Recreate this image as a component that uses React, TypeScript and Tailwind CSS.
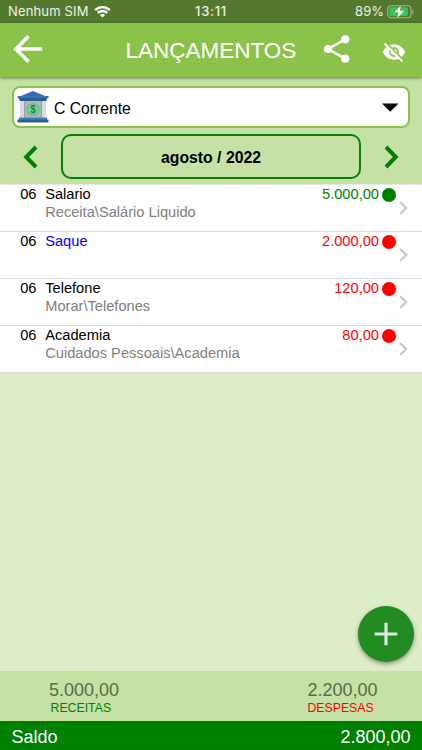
const SANS = "font-['Liberation_Sans',Arial,sans-serif]";

type Entry = {
  title: string;
  category: string;
  amount: string;
  titleColor: string;
  amountColor: string;
  dotColor: string;
};

const entries: Entry[] = [
  { title: "Salario", category: "Receita\\Salário Liquido", amount: "5.000,00", titleColor: "text-black", amountColor: "text-[#008000]", dotColor: "bg-[#008000]" },
  { title: "Saque", category: "", amount: "2.000,00", titleColor: "text-[#0000ff]", amountColor: "text-[#ff0000]", dotColor: "bg-[#ff0000]" },
  { title: "Telefone", category: "Morar\\Telefones", amount: "120,00", titleColor: "text-black", amountColor: "text-[#ff0000]", dotColor: "bg-[#ff0000]" },
  { title: "Academia", category: "Cuidados Pessoais\\Academia", amount: "80,00", titleColor: "text-black", amountColor: "text-[#ff0000]", dotColor: "bg-[#ff0000]" },
];

function StatusBar() {
  return (
    <div className="grid h-[23px] shrink-0 grid-cols-3 items-center bg-[#54782d] pr-[8px] pl-2 font-['Inter',sans-serif] text-[13px] text-white/90">
      <div className="flex items-center gap-[5px] whitespace-nowrap">
        <span className="tracking-[0.15px]">Nenhum SIM</span>
        <svg width="17" height="13" viewBox="0 0 18 13" fill="none" stroke="white" strokeWidth="2.5">
          <path d="M1.2 5.1a11 11 0 0 1 15.6 0" />
          <path d="M4.1 8a7 7 0 0 1 9.8 0" />
          <path d="M6.3 10.2a3.9 3.9 0 0 1 5.4 0L9 12.9Z" fill="white" stroke="none" />
        </svg>
      </div>
      <span className="text-center font-medium tracking-[0.7px]">13:11</span>
      <div className="flex items-center justify-end gap-[3px]">
        <span>89%</span>
        <svg width="27" height="14" viewBox="0 0 27 14">
          <rect x="0.7" y="0.7" width="23.3" height="12" rx="3.5" fill="none" stroke="#a5b792" strokeWidth="1.1" />
          <rect x="2.3" y="2.3" width="18.5" height="8.8" rx="1.8" fill="#33c75a" />
          <path d="M25.2 4.5v4.4a2.5 2.5 0 0 0 0-4.4Z" fill="#a5b792" />
          <path d="M14.2.2 6.8 7.4h4.4L9.8 13.4l8-7.6h-4.6Z" fill="white" stroke="#54782d" strokeWidth=".4" />
        </svg>
      </div>
    </div>
  );
}

function Header() {
  return (
    <header className="z-10 flex h-[54px] shrink-0 items-center bg-[#8bc34a] pl-[13px] text-white shadow-[0_1px_3px_rgba(0,0,0,0.5)]">
      <svg className="-mt-[2px]" width="30" height="30" viewBox="0 0 30 30" fill="none" stroke="white" strokeWidth="3.5">
        <path d="M29 15H3M15.5 2.3 3 15 15.5 27.7" />
      </svg>
      <h1 className="ml-[82.5px] w-[172.5px] pt-[2px] text-[22.5px] leading-none whitespace-nowrap">LANÇAMENTOS</h1>
      <svg className="-mt-[2px] ml-[25px]" width="28" height="30" viewBox="0 0 28 30" fill="white">
        <path d="M22 5.3 5 15l17 9.7" fill="none" stroke="white" strokeWidth="2.5" />
        <circle cx="22.3" cy="5.3" r="4.1" />
        <circle cx="5" cy="15" r="4.1" />
        <circle cx="22.3" cy="24.7" r="4.1" />
      </svg>
      <svg className="mt-[3px] ml-[31px]" width="24" height="24" viewBox="0 0 24 24" fill="white" stroke="white" strokeWidth=".3">
        <path d="M12 7c2.76 0 5 2.24 5 5 0 .65-.13 1.26-.36 1.83l2.92 2.92c1.51-1.26 2.7-2.89 3.43-4.75-1.73-4.39-6-7.5-11-7.5-1.4 0-2.74.25-3.98.7l2.16 2.16C10.74 7.13 11.35 7 12 7zM2 4.27l2.28 2.28.46.46A11.8 11.8 0 0 0 1 12c1.73 4.39 6 7.5 11 7.5 1.55 0 3.03-.3 4.38-.84l.42.42L19.73 22 21 20.73 3.27 3 2 4.27zM7.53 9.8l1.55 1.55c-.05.21-.08.43-.08.65 0 1.66 1.34 3 3 3 .22 0 .44-.03.65-.08l1.55 1.55c-.67.33-1.41.53-2.2.53-2.76 0-5-2.24-5-5 0-.79.2-1.53.53-2.2zm4.31-.78 3.15 3.15.02-.16c0-1.66-1.34-3-3-3l-.17.01z" />
      </svg>
    </header>
  );
}

function BankIcon() {
  return (
    <svg width="32" height="32" viewBox="0 0 32 32">
      <path d="M3 9h26v19H3Z" fill="#b4b6b9" />
      <path d="M3 10h4v17H3ZM25 10h4v17h-4Z" fill="#d8dadd" />
      <path d="M7 10h1.2v17H7ZM23.8 10H25v17h-1.2Z" fill="#9ba1a8" />
      <circle cx="16" cy="18.5" r="6.6" fill="#68bd8d" />
      <circle cx="16" cy="18.5" r="5" fill="#6fdc98" />
      <text x="16" y="22" textAnchor="middle" className="fill-[#17804a] text-[10px] font-bold">$</text>
      <path d="M16 0 30.5 6H1.5Z" fill="#356ba8" />
      <path d="M0.5 5.5h31L29 10H3Z" fill="#2d5c94" />
      <path d="M.5 5h31v1.8H.5Z" fill="#3c76b3" />
      <path d="M2 26.5h28V29H2Z" fill="#4380bd" />
      <path d="M.5 28.5h31v3H.5Z" fill="#2d5c94" />
    </svg>
  );
}

function Filters() {
  return (
    <section className="flex h-[107px] shrink-0 flex-col bg-[#c5e1a5] px-3 pt-[9px]">
      <div className="flex h-[42px] shrink-0 items-center rounded-[8px] border-2 border-[#8bc34a] bg-white pr-[9px] pl-[3px]">
        <BankIcon />
        <span className="ml-[5px] flex-1 pt-[3px] text-[15.7px] text-black">C Corrente</span>
        <svg width="17" height="9" viewBox="0 0 17 9"><path d="M0 .5h16.5L8.2 8.8Z" fill="black" /></svg>
      </div>
      <div className="mt-[6px] flex h-[45px] shrink-0 items-center">
        <svg className="ml-[11px]" width="15" height="24" viewBox="0 0 15 24" fill="none" stroke="#008000" strokeWidth="4">
          <path d="M13 2 3.2 12 13 22" />
        </svg>
        <div className="ml-[23px] flex h-[45px] w-[300px] items-center justify-center rounded-[10px] border-2 border-[#087f08] pt-[2px] text-[15.8px] font-bold text-black">
          agosto / 2022
        </div>
        <svg className="ml-[23px]" width="15" height="24" viewBox="0 0 15 24" fill="none" stroke="#008000" strokeWidth="4">
          <path d="M2 2l9.8 10L2 22" />
        </svg>
      </div>
    </section>
  );
}

function EntryRow({ entry }: { entry: Entry }) {
  return (
    <li className="flex h-[47px] border-b border-[#dcdcdc] bg-white pl-[20.2px] text-[14.65px] leading-[18px]">
      <span className="w-[25px] text-black">06</span>
      <div className="flex-1">
        <div className={entry.titleColor}>{entry.title}</div>
        <div className="text-[#808080]">{entry.category}</div>
      </div>
      <span className={entry.amountColor}>{entry.amount}</span>
      <div className="flex w-[43px] pl-[3px]">
        <span className={`mt-[3px] size-[14px] shrink-0 rounded-full ${entry.dotColor}`} />
        <svg className="mt-[15px] ml-[3px] shrink-0" width="9" height="16" viewBox="0 0 9 16" fill="none" stroke="#c7c7cc" strokeWidth="2.2">
          <path d="M1 2 7.2 8 1 14" />
        </svg>
      </div>
    </li>
  );
}

function Summary() {
  return (
    <footer className="shrink-0">
      <div className="flex h-[50px] justify-between bg-[#c5e1a5] pt-[9px] pr-[44.5px] pl-[49px]">
        <div>
          <div className="text-[18px] leading-[20px] text-[#5a6b48]">5.000,00</div>
          <div className="pl-[1.5px] text-[12.3px] leading-[16px] text-[#008000]">RECEITAS</div>
        </div>
        <div>
          <div className="text-[18px] leading-[20px] text-[#5a6b48]">2.200,00</div>
          <div className="text-[12.3px] leading-[16px] text-[#ff0000]">DESPESAS</div>
        </div>
      </div>
      <div className="flex h-[29px] items-center justify-between bg-[#008000] pt-[3px] pr-[11.5px] pl-[11.5px] text-[18px] text-white">
        <span>Saldo</span>
        <span>2.800,00</span>
      </div>
    </footer>
  );
}

export default function App() {
  return (
    <div className={`relative flex h-[750px] w-[422px] flex-col overflow-hidden bg-[#dcedc8] ${SANS}`}>
      <StatusBar />
      <Header />
      <Filters />
      <ul className="flex-1 border-t border-[#e4e9de]">
        {entries.map((entry) => (
          <EntryRow key={entry.title} entry={entry} />
        ))}
      </ul>
      <Summary />
      <button aria-label="+" className="absolute right-[8.5px] bottom-[88px] flex size-[56px] items-center justify-center rounded-full bg-[#228b22] shadow-[0_2px_4px_rgba(0,0,0,0.4)]">
        <svg width="24" height="24" viewBox="0 0 24 24" fill="none" stroke="#d9ecd9" strokeWidth="3.2">
          <path d="M12 .7v22.6M.7 12h22.6" />
        </svg>
      </button>
    </div>
  );
}
